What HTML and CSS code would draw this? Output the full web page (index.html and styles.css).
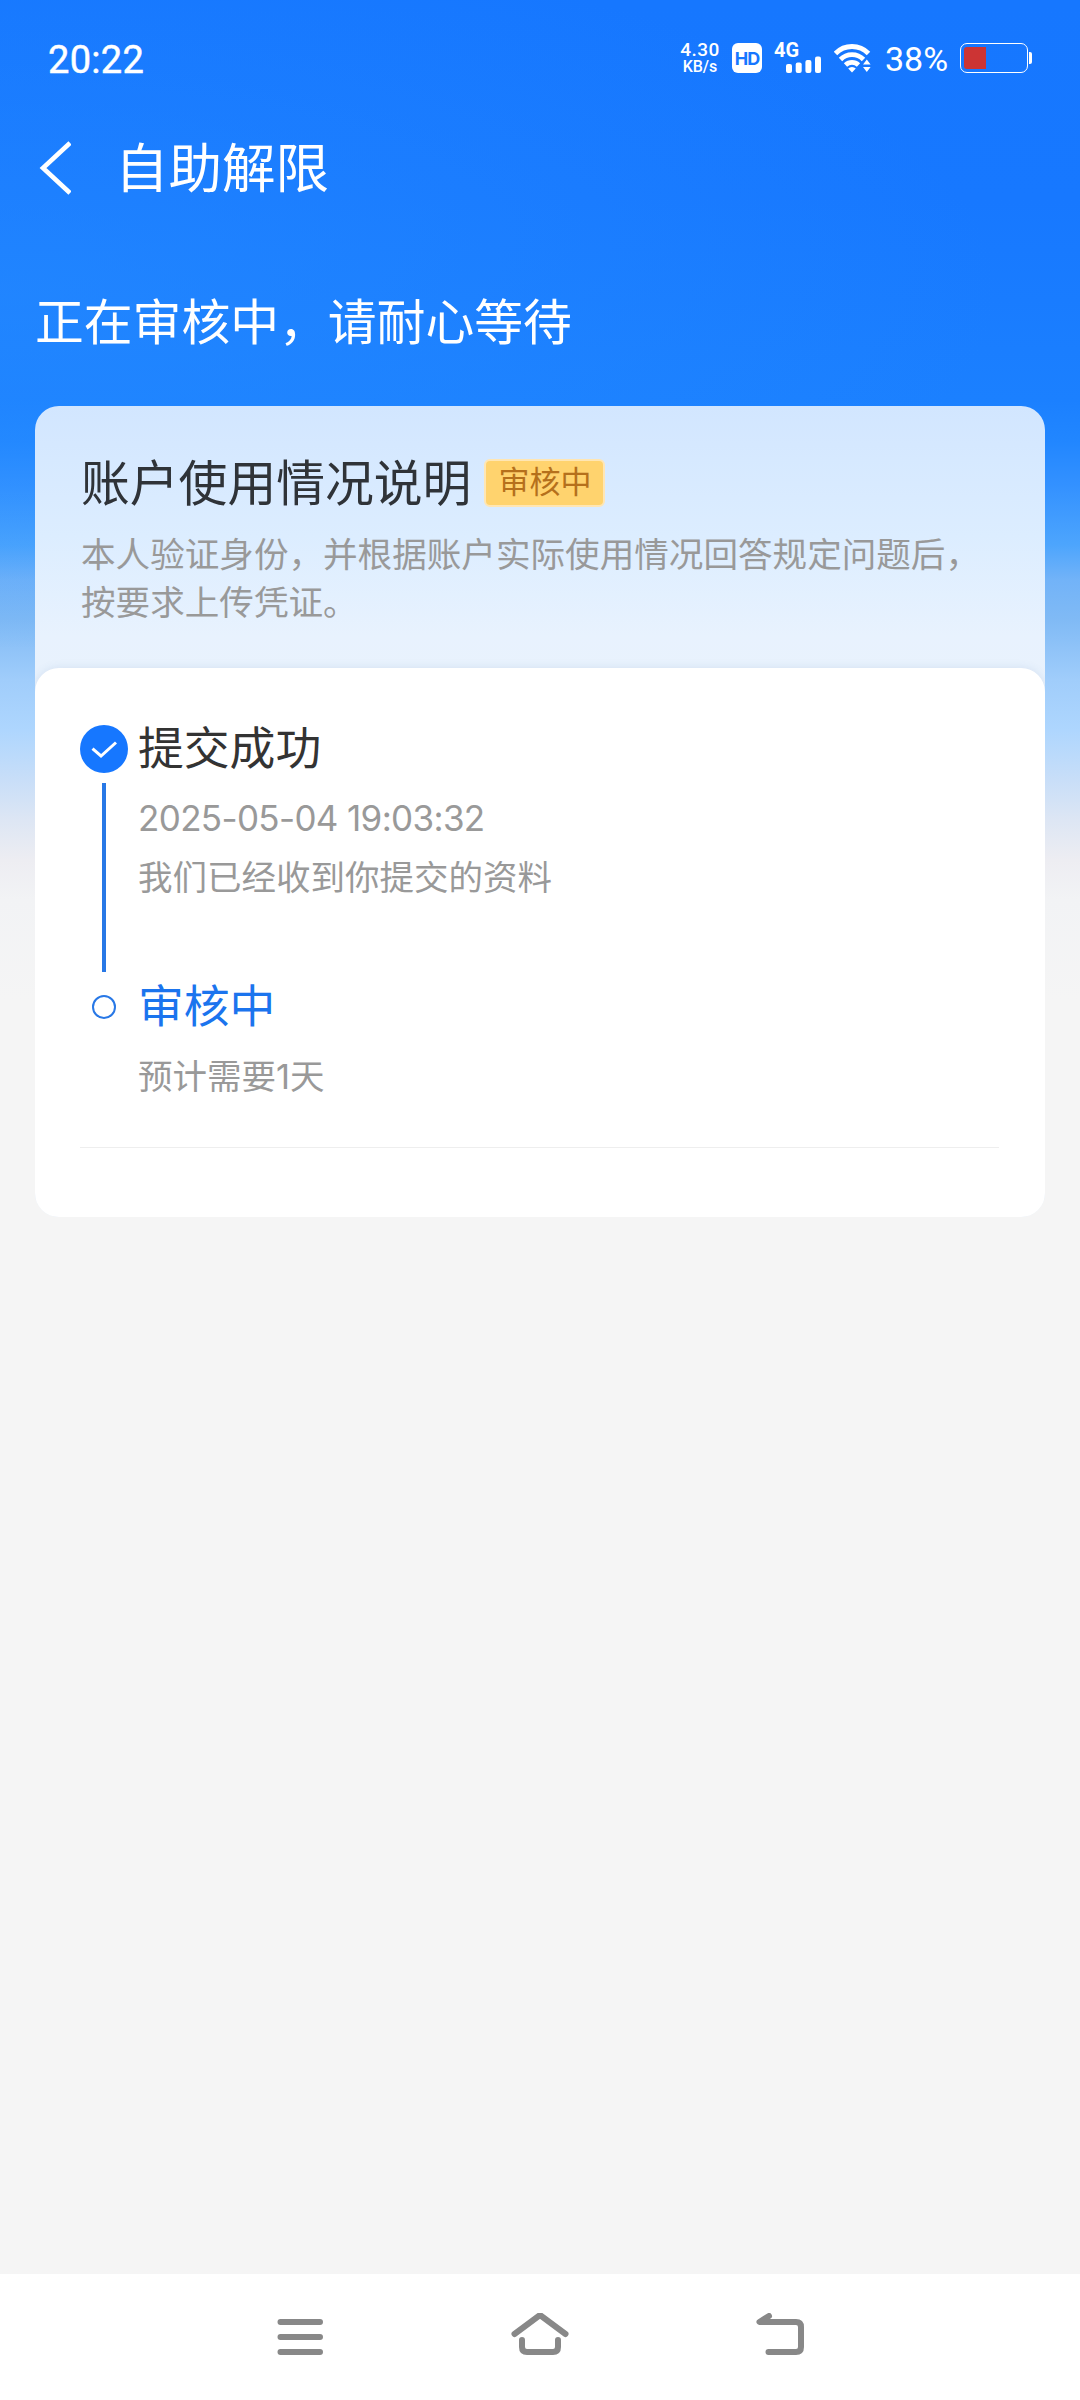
FILE: index.html
```html
<!DOCTYPE html>
<html lang="zh-CN">
<head>
<meta charset="utf-8">
<title>自助解限</title>
<link rel="stylesheet" href="styles.css">
</head>
<body>

<div class="page">
    <div class="statusBar">
        <div class="time">20:22</div>
        <div class="statusIcons">
            <div class="speed"><span class="speedNum">4.30</span><span class="speedUnit">KB/s</span></div>
            <div class="hd">HD</div>
            <div class="signal">
                <span class="signalType">4G</span>
                <svg width="36" height="18" viewBox="0 0 36 18" fill="#fff">
                    <rect x="0" y="9" width="6" height="9" rx="2"/>
                    <rect x="9.7" y="7.5" width="6" height="10.5" rx="2"/>
                    <rect x="19.4" y="5" width="6" height="13" rx="2"/>
                    <rect x="29" y="1.5" width="6" height="16.5" rx="2"/>
                </svg>
            </div>
            <svg class="wifi" width="38" height="30" viewBox="0 0 38 30">
                <g fill="none" stroke="#fff" stroke-width="4.8">
                    <path d="M1.5 10.5 A23 23 0 0 1 34.5 10.5"/>
                    <path d="M6.5 16.5 A16 16 0 0 1 29.5 16.5"/>
                    <path d="M11.5 22 A9.5 9.5 0 0 1 24.5 22"/>
                </g>
                <path d="M14.2 25.6 A5.5 5.5 0 0 1 21.8 25.6 L18 29.5 Z" fill="#fff"/>
                <path d="M29 21.5 L32.8 16.5 L36.6 21.5 Z M29 24 H36.6 L32.8 29 Z" fill="#fff"/>
            </svg>
            <div class="percent">38%</div>
            <div class="battery"><div class="batteryBody"><div class="batteryFill"></div></div><div class="batteryTip"></div></div>
        </div>
    </div>

    <div class="titleBar">
        <svg class="back" width="32" height="54" viewBox="0 0 32 54" fill="none" stroke="#fff" stroke-width="4.6">
            <path d="M31 2 L4 27 L31 52"/>
        </svg>
        <h1>自助解限</h1>
    </div>

    <p class="headline">正在审核中，请耐心等待</p>

    <div class="card">
        <div class="cardHeader">
            <div class="cardTitle">
                <h2>账户使用情况说明</h2>
                <span class="tag">审核中</span>
            </div>
            <p>本人验证身份，并根据账户实际使用情况回答规定问题后，<br>按要求上传凭证。</p>
        </div>
        <div class="cardBody">
            <div class="step">
                <div class="mark">
                    <svg width="48" height="48" viewBox="0 0 48 48">
                        <circle cx="24" cy="24" r="24" fill="#1677ff"/>
                        <path d="M12.5 23.7 L21 31 L36 17.5" fill="none" stroke="#fff" stroke-width="3"/>
                    </svg>
                    <div class="line"></div>
                </div>
                <div class="stepText">
                    <h3>提交成功</h3>
                    <p class="date">2025-05-04 19:03:32</p>
                    <p>我们已经收到你提交的资料</p>
                </div>
            </div>
            <div class="step">
                <div class="mark"><div class="ring"></div></div>
                <div class="stepText">
                    <h3 class="current">审核中</h3>
                    <p>预计需要<span class="num">1</span>天</p>
                </div>
            </div>
            <div class="divider"></div>
        </div>
    </div>

    <div class="navBar">
        <svg width="60" height="48" viewBox="0 0 60 48">
            <path d="M10.5 9 H50 M10.5 24 H50 M10.5 39 H50"/>
        </svg>
        <svg width="60" height="48" viewBox="0 0 60 48">
            <path d="M4.5 21 L30 2 L55.5 21 M12 27 V34 Q12 39 17 39 H43 Q48 39 48 34 V27"/>
        </svg>
        <svg width="60" height="48" viewBox="0 0 60 48">
            <path d="M19 3 L9.5 9 H46 Q51 9 51 14 V34 Q51 39 46 39 H18.5"/>
        </svg>
    </div>
</div>

</body>
</html>
```

FILE: styles.css
```css
* {
    box-sizing: border-box;
}

body {
    margin: 0;
    background: #f5f5f5;
    font-family: Roboto, "Noto Sans CJK SC", sans-serif;
}

h1, h2, h3, p {
    margin: 0;
    font-weight: normal;
    white-space: nowrap;
    font-family: "Noto Sans CJK SC", sans-serif;
}

.page {
    width: 1080px;
    height: 2400px;
    display: flex;
    flex-direction: column;
    overflow: hidden;
    background:
        radial-gradient(1000px 360px at 0 290px, rgba(40, 142, 255, 0.5), rgba(40, 142, 255, 0)) 0 0 / 100% 650px no-repeat,
        linear-gradient(#1677ff 0, #1778ff 200px, #1b80ff 400px, #2186ff 440px, #3391ff 485px,
            #4da5fd 545px, #72b3f8 580px, #80baf5 620px, #a0cdfb 680px, #aed6fe 730px,
            #c8def8 780px, #dde6f4 820px, #ededf2 860px, #f2f3f5 900px, #f5f5f5 1000px);
}

/* status bar */
.statusBar {
    height: 116px;
    display: flex;
    justify-content: space-between;
    padding: 0 48px;
    color: #fff;
}

.time {
    font-size: 38px;
    font-weight: 400;
    line-height: 121px;
    letter-spacing: 0.3px;
    -webkit-text-stroke: 0.5px #fff;
}

.statusIcons {
    height: 116px;
    display: flex;
    align-items: center;
}

.speed {
    width: 40px;
    display: flex;
    flex-direction: column;
    align-items: center;
    font-weight: 500;
    margin-right: 12px;
}

.speedNum {
    font-size: 19px;
    line-height: 17px;
    letter-spacing: 0.5px;
}

.speedUnit {
    font-size: 16px;
    line-height: 17px;
}

.hd {
    width: 30px;
    height: 30px;
    border-radius: 6px;
    background: #fff;
    color: #1677ff;
    font: bold 18px/31px Inter, sans-serif;
    letter-spacing: -1px;
    text-align: center;
    margin-right: 12px;
}

.signal {
    width: 48px;
    height: 30px;
    display: flex;
    flex-direction: column;
    margin-right: 12px;
}

.signalType {
    font: bold 20px/14px Roboto, sans-serif;
    height: 12px;
}

.signal svg {
    align-self: flex-end;
}

.wifi {
    margin-right: 13px;
}

.percent {
    width: 64px;
    font-size: 34px;
    line-height: 38px;
    padding-top: 2px;
    margin-right: 11px;
}

.battery {
    display: flex;
    align-items: center;
}

.batteryBody {
    width: 68px;
    height: 30px;
    border: 1.5px solid #fff;
    border-radius: 7px;
    padding: 3px;
}

.batteryFill {
    width: 22px;
    height: 22px;
    border-radius: 3px 0 0 3px;
    background: #cc3434;
}

.batteryTip {
    width: 3px;
    height: 12px;
    margin-left: 1px;
    border-radius: 0 2px 2px 0;
    background: #fff;
}

/* title */
.titleBar {
    height: 104px;
    display: flex;
    align-items: center;
    padding-left: 39px;
    color: #fff;
}

.back {
    margin-right: 44px;
}

.titleBar h1 {
    height: 104px;
    font-size: 53.5px;
    line-height: 98px;
}

.headline {
    height: 186px;
    padding: 49px 0 0 35px;
    font-size: 48.8px;
    line-height: 100px;
    color: #fff;
}

/* card */
.card {
    width: 1010px;
    height: 811px;
    margin: 0 35px;
    border-radius: 24px;
    overflow: hidden;
    background: linear-gradient(#d2e6ff 0, #dcedff 130px, #e8f2fe 230px, #e9f2fc 290px);
}

.cardHeader {
    height: 262px;
    padding: 47px 46px 0;
}

.cardTitle {
    height: 60px;
    display: flex;
    align-items: center;
}

.cardTitle h2 {
    height: 60px;
    font-size: 48.8px;
    line-height: 54px;
    color: #2f3338;
}

.tag {
    width: 121px;
    height: 48px;
    margin-left: 13px;
    border: 2px solid #ffe6b3;
    border-radius: 6px;
    background: #ffd36e;
    color: #b5701c;
    font-size: 31px;
    line-height: 43px;
    text-align: center;
}

.cardHeader p {
    margin-top: 15px;
    font-size: 34.6px;
    line-height: 48px;
    color: #999;
}

.cardBody {
    height: 549px;
    padding: 51px 46px 0 45px;
    border-radius: 24px 24px 0 0;
    background: #fff;
    box-shadow: 0 0 10px rgba(60, 110, 160, 0.13);
}

.step {
    height: 258px;
    display: flex;
}

.step + .step {
    height: 170px;
}

.mark {
    width: 48px;
    margin-right: 10px;
    padding-top: 6px;
    display: flex;
    flex-direction: column;
    align-items: center;
}

.mark svg {
    display: block;
}

.line {
    width: 3.5px;
    height: 189px;
    margin-top: 10px;
    background: #2878e6;
}

.ring {
    width: 24px;
    height: 24px;
    margin-top: 12px;
    border: 2.5px solid #2878e6;
    border-radius: 50%;
}

.stepText {
    margin-top: -4px;
}

.stepText h3 {
    font-size: 45.8px;
    line-height: 60px;
    color: #333;
}

.stepText h3.current {
    color: #1b74ee;
}

.stepText p {
    margin-top: 12px;
    font-size: 34.5px;
    line-height: 58px;
    color: #999;
}

.stepText .date {
    margin-top: 14px;
    margin-bottom: -13px;
    font-family: Inter, sans-serif;
    font-size: 35px;
    letter-spacing: -0.65px;
}

.num {
    font-family: Inter, sans-serif;
}

.divider {
    height: 1px;
    background: #eee;
}

/* system navigation */
.navBar {
    height: 126px;
    margin-top: auto;
    padding: 39px 0 0 270px;
    display: flex;
    gap: 180px;
    background: #fff;
}

.navBar svg {
    fill: none;
    stroke: #888;
    stroke-width: 6;
    stroke-linecap: round;
    stroke-linejoin: round;
}
```
